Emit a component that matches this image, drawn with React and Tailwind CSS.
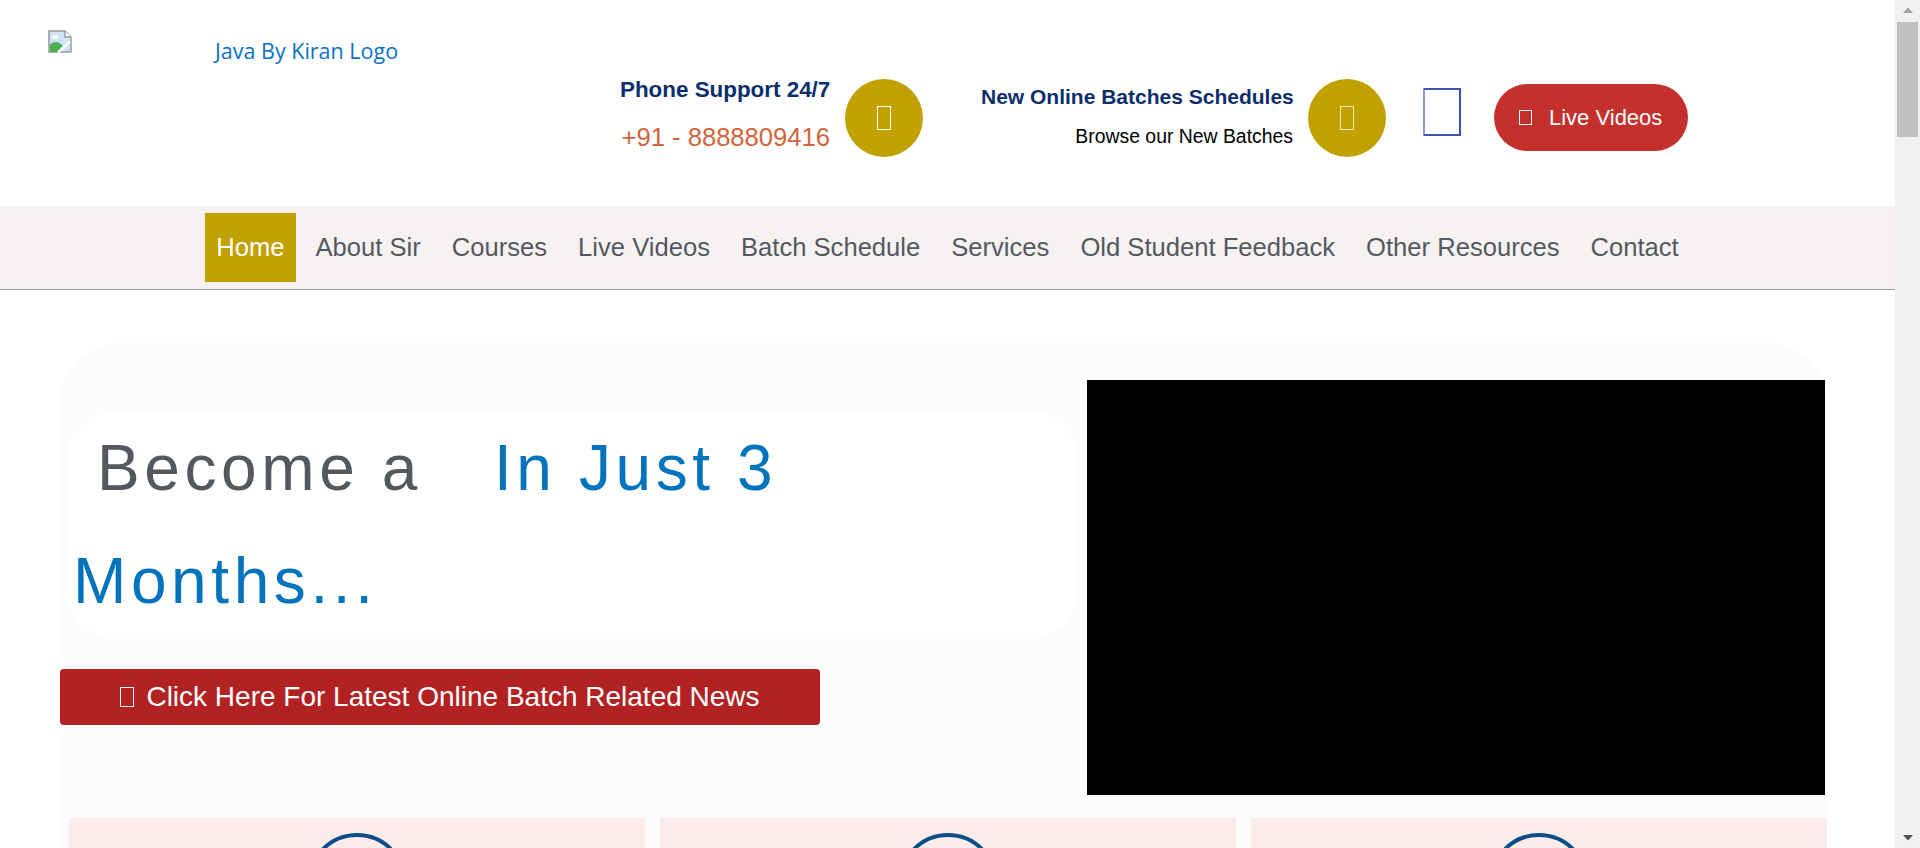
import React from "react";

const navItems = [
  "Home",
  "About Sir",
  "Courses",
  "Live Videos",
  "Batch Schedule",
  "Services",
  "Old Student Feedback",
  "Other Resources",
  "Contact",
];

// missing icon-font glyph, drawn as the empty box the browser shows
const Tofu = ({ className }) => (
  <span className={`inline-block shrink-0 border ${className}`} />
);

const BrokenImage = () => (
  <svg width="24" height="23" viewBox="0 0 24 23">
    <path d="M1 1h16l6 6v15H1z" fill="#cfe3f7" stroke="#9b9b9b" strokeWidth="1.5" />
    <path d="M17 1v6h6" fill="#fff" stroke="#9b9b9b" strokeWidth="1.5" />
    <ellipse cx="7" cy="7" rx="3.5" ry="2" fill="#fff" />
    <path d="M1.8 22V15c4-4 9-4 13 1l-5 6z" fill="#4caf50" />
    <path d="M10 22.5l12-11" stroke="#fff" strokeWidth="2.5" />
  </svg>
);

const GoldCircle = ({ glyph }) => (
  <div className="mt-[3px] flex h-[78px] w-[78px] shrink-0 items-center justify-center rounded-full bg-[#c1a100]">
    <Tofu className={`h-[24px] w-[14px] ${glyph}`} />
  </div>
);

const Scrollbar = () => (
  <aside className="sticky top-0 flex h-screen w-[25px] shrink-0 flex-col items-center bg-[#f1f1f1]">
    <svg width="12" height="20" viewBox="0 0 12 20" className="shrink-0">
      <path d="M1 13L6 7.5L11 13z" fill="#a3a3a3" />
    </svg>
    <div className="mt-[2px] h-[115px] w-[21px] bg-[#c1c1c1]" />
    <div className="flex-1" />
    <svg width="12" height="20" viewBox="0 0 12 20" className="shrink-0">
      <path d="M1 7L6 12.5L11 7z" fill="#505050" />
    </svg>
  </aside>
);

export default function App() {
  return (
    <div className="flex bg-white font-['Liberation_Sans',Arial,sans-serif]">
      <div className="min-w-0 flex-1">
        {/* top header */}
        <header className="flex h-[206px] items-start pl-[48px]">
          <div className="flex w-[352px] shrink-0 items-start pt-[30px]">
            <BrokenImage />
            <span className="ml-[143px] mt-[6px] whitespace-nowrap font-['Open_Sans',sans-serif] text-[21.5px] leading-[30px] text-[#0a72c6]">
              Java By Kiran Logo
            </span>
          </div>

          <div className="ml-[220px] mt-[76px] flex items-start">
            <div className="w-[210px] text-right">
              <p className="whitespace-nowrap text-[22.4px] font-bold leading-[28px] text-[#0b2f6b]">
                Phone Support 24/7
              </p>
              <p className="mt-[17px] whitespace-nowrap text-[25.6px] leading-[32px] text-[#d2643c]">
                +91 - 8888809416
              </p>
            </div>
            <div className="ml-[15px]">
              <GoldCircle glyph="border-white" />
            </div>

            <div className="ml-[58px] mt-[8px] w-[312px] text-right">
              <p className="whitespace-nowrap text-[21px] font-bold leading-[26px] text-[#0b2f6b]">
                New Online Batches Schedules
              </p>
              <p className="mt-[14px] whitespace-nowrap text-[19.4px] leading-[24px] text-black">
                Browse our New Batches
              </p>
            </div>
            <div className="ml-[15px]">
              <GoldCircle glyph="border-[#f3e9a8]" />
            </div>

            <span className="ml-[37px] mt-[12px] inline-block h-[48px] w-[38px] shrink-0 border-2 border-[#3f51b5] border-l-[#8a99d8]" />

            <a className="ml-[33px] mt-[8px] flex h-[67px] w-[194px] shrink-0 items-center rounded-full bg-[#c4302b] pl-[25px] text-[22px] text-white">
              <Tofu className="h-[15px] w-[13px] border-white" />
              <span className="ml-[17px] whitespace-nowrap">Live Videos</span>
            </a>
          </div>
        </header>

        {/* main menu */}
        <nav className="flex justify-center gap-[9px] border-b border-[#9e9e9e] bg-[#f6f2f2] py-[7px]">
          {navItems.map((item, i) => (
            <a
              key={item}
              className={`flex h-[69px] items-center whitespace-nowrap px-[11px] text-[25.6px] ${
                i === 0 ? "bg-[#c1a100] text-white" : "text-[#54595f]"
              }`}
            >
              {item}
            </a>
          ))}
        </nav>

        {/* hero */}
        <section className="ml-[60px] mt-[53px] w-[1767px] rounded-[60px] bg-[#fcfcfc] pb-[40px]">
          <div className="flex">
            <div className="w-[1018px] shrink-0 pt-[68px]">
              <div className="ml-[7px] rounded-[50px] bg-white py-[1px] pl-[6px] pr-[40px] text-[64px] leading-[113px] tracking-[4.6px]">
                <div className="whitespace-nowrap">
                  <span className="pl-[24px] text-[#54595f]">Become a</span>
                  <span className="ml-[72px] text-[#0274be]">In Just 3</span>
                </div>
                <div className="text-[#0274be]">Months...</div>
              </div>

              <button className="mt-[30px] flex h-[56px] w-[760px] items-center justify-center gap-[12px] rounded-[4px] bg-[#b22222] text-[28px] text-white">
                <Tofu className="h-[20px] w-[14px] border-white" />
                Click Here For Latest Online Batch Related News
              </button>
            </div>

            <div className="ml-[9px] pt-[37px]">
              <div className="h-[415px] w-[738px] bg-black" />
            </div>
          </div>

          <div className="mt-[23px] flex gap-[15px] pl-[9px]">
            {[0, 1, 2].map((i) => (
              <div
                key={i}
                className="flex h-[280px] w-[576px] justify-center bg-[#fcebeb] pt-[15px]"
              >
                <div className="h-[100px] w-[100px] rounded-full border-4 border-[#0b4d87]" />
              </div>
            ))}
          </div>
        </section>
      </div>

      <Scrollbar />
    </div>
  );
}
